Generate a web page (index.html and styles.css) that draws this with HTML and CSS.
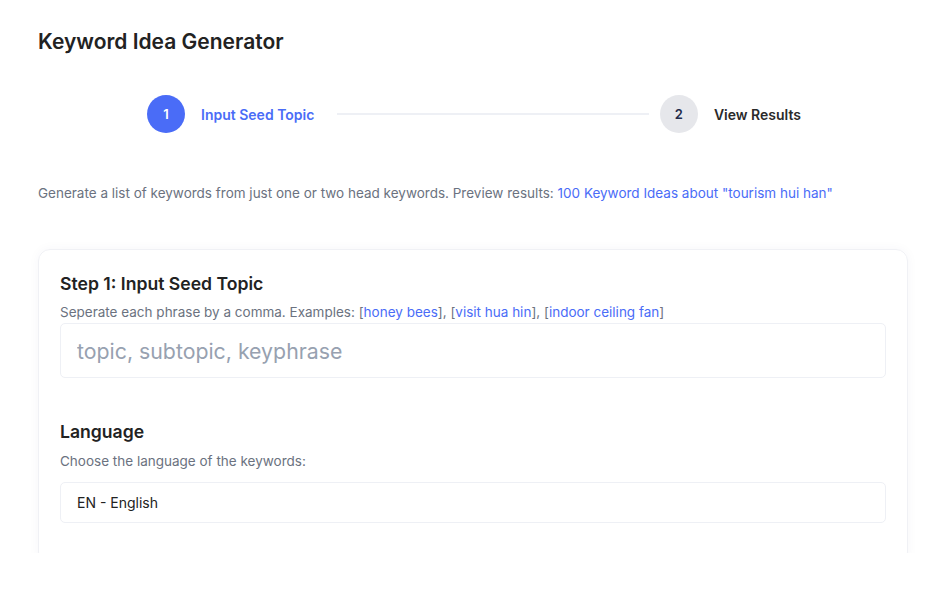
FILE: index.html
```html
<!DOCTYPE html>
<html lang="en">
<head>
    <meta charset="UTF-8">
    <meta name="viewport" content="width=device-width, initial-scale=1.0">
    <title>Keyword Idea Generator</title>
    <link rel="stylesheet" href="styles.css">
</head>
<body>
    <div class="page">
        <h1 class="title">Keyword Idea Generator</h1>

        <div class="stepper">
            <div class="step active">
                <span class="step-num">1</span>
                <span class="step-label">Input Seed Topic</span>
            </div>
            <div class="step-line"></div>
            <div class="step">
                <span class="step-num">2</span>
                <span class="step-label">View Results</span>
            </div>
        </div>

        <p class="intro">Generate a list of keywords from just one or two head keywords. Preview results: <a href="#">100 Keyword Ideas about "tourism hui han"</a></p>

        <div class="card">
            <div class="field">
                <h2>Step 1: Input Seed Topic</h2>
                <p class="hint">Seperate each phrase by a comma. Examples: [<a href="#">honey bees</a>], [<a href="#">visit hua hin</a>], [<a href="#">indoor ceiling fan</a>]</p>
                <input type="text" class="seed-input" placeholder="topic, subtopic, keyphrase">
            </div>
            <div class="field">
                <h2>Language</h2>
                <p class="hint">Choose the language of the keywords:</p>
                <div class="select-box">EN - English</div>
            </div>
        </div>
    </div>
</body>
</html>
```

FILE: styles.css
```css
body {
    margin: 0;
    font-family: "Inter", "Liberation Sans", sans-serif;
    color: #1f2328;
    background: #fff;
}
.page {
    height: 553px;
    overflow: hidden;
    padding: 0 23px 0 38px;
}
.title {
    margin: 0;
    padding-top: 29px;
    font-size: 21px;
    line-height: 26px;
    font-weight: 600;
    color: #222;
}
.stepper {
    display: flex;
    align-items: center;
    margin: 40px 0 0 109px;
    width: 654px;
}
.step {
    display: flex;
    align-items: center;
    gap: 16px;
}
.step-num {
    width: 38px;
    height: 38px;
    border-radius: 50%;
    background: #e6e7eb;
    color: #222b4a;
    display: flex;
    align-items: center;
    justify-content: center;
    font-size: 13px;
    font-weight: 600;
}
.step-label {
    font-size: 14px;
    font-weight: 600;
    color: #2a2a2a;
}
.step.active .step-num {
    background: #4a6cf7;
    color: #fff;
}
.step.active .step-label {
    color: #4a6cf7;
}
.step-line {
    flex: 1;
    height: 2px;
    background: #eef0f5;
    margin: 0 11px 0 23px;
}
.intro {
    margin: 51px 0 0;
    font-size: 13.5px;
    line-height: 18px;
    color: #6b7280;
}
a {
    color: #4a6cf7;
    text-decoration: none;
}
.card {
    margin-top: 47px;
    border: 1px solid #f0f1f5;
    border-radius: 12px;
    box-shadow: 0 0 12px rgba(40, 50, 90, 0.04);
    padding: 22px 21px 40px;
}
.field + .field {
    margin-top: 42px;
}
.field h2 {
    margin: 0;
    font-size: 17.6px;
    line-height: 24px;
    font-weight: 600;
    color: #222;
}
.hint {
    margin: 7px 0 0;
    font-size: 13.5px;
    line-height: 18px;
    color: #6b7280;
}
.field + .field .hint {
    margin-top: 8px;
}
.seed-input {
    display: block;
    box-sizing: border-box;
    width: 100%;
    height: 55px;
    margin-top: 2px;
    padding: 0 16px;
    border: 1px solid #eef0f5;
    border-radius: 5px;
    font-family: inherit;
    font-size: 21.3px;
    color: #333;
    outline: none;
}
.seed-input::placeholder {
    color: #97a1b0;
}
.select-box {
    box-sizing: border-box;
    height: 41px;
    margin-top: 12px;
    padding: 0 16px;
    border: 1px solid #eef0f5;
    border-radius: 5px;
    display: flex;
    align-items: center;
    font-size: 14px;
    color: #222;
}
```
